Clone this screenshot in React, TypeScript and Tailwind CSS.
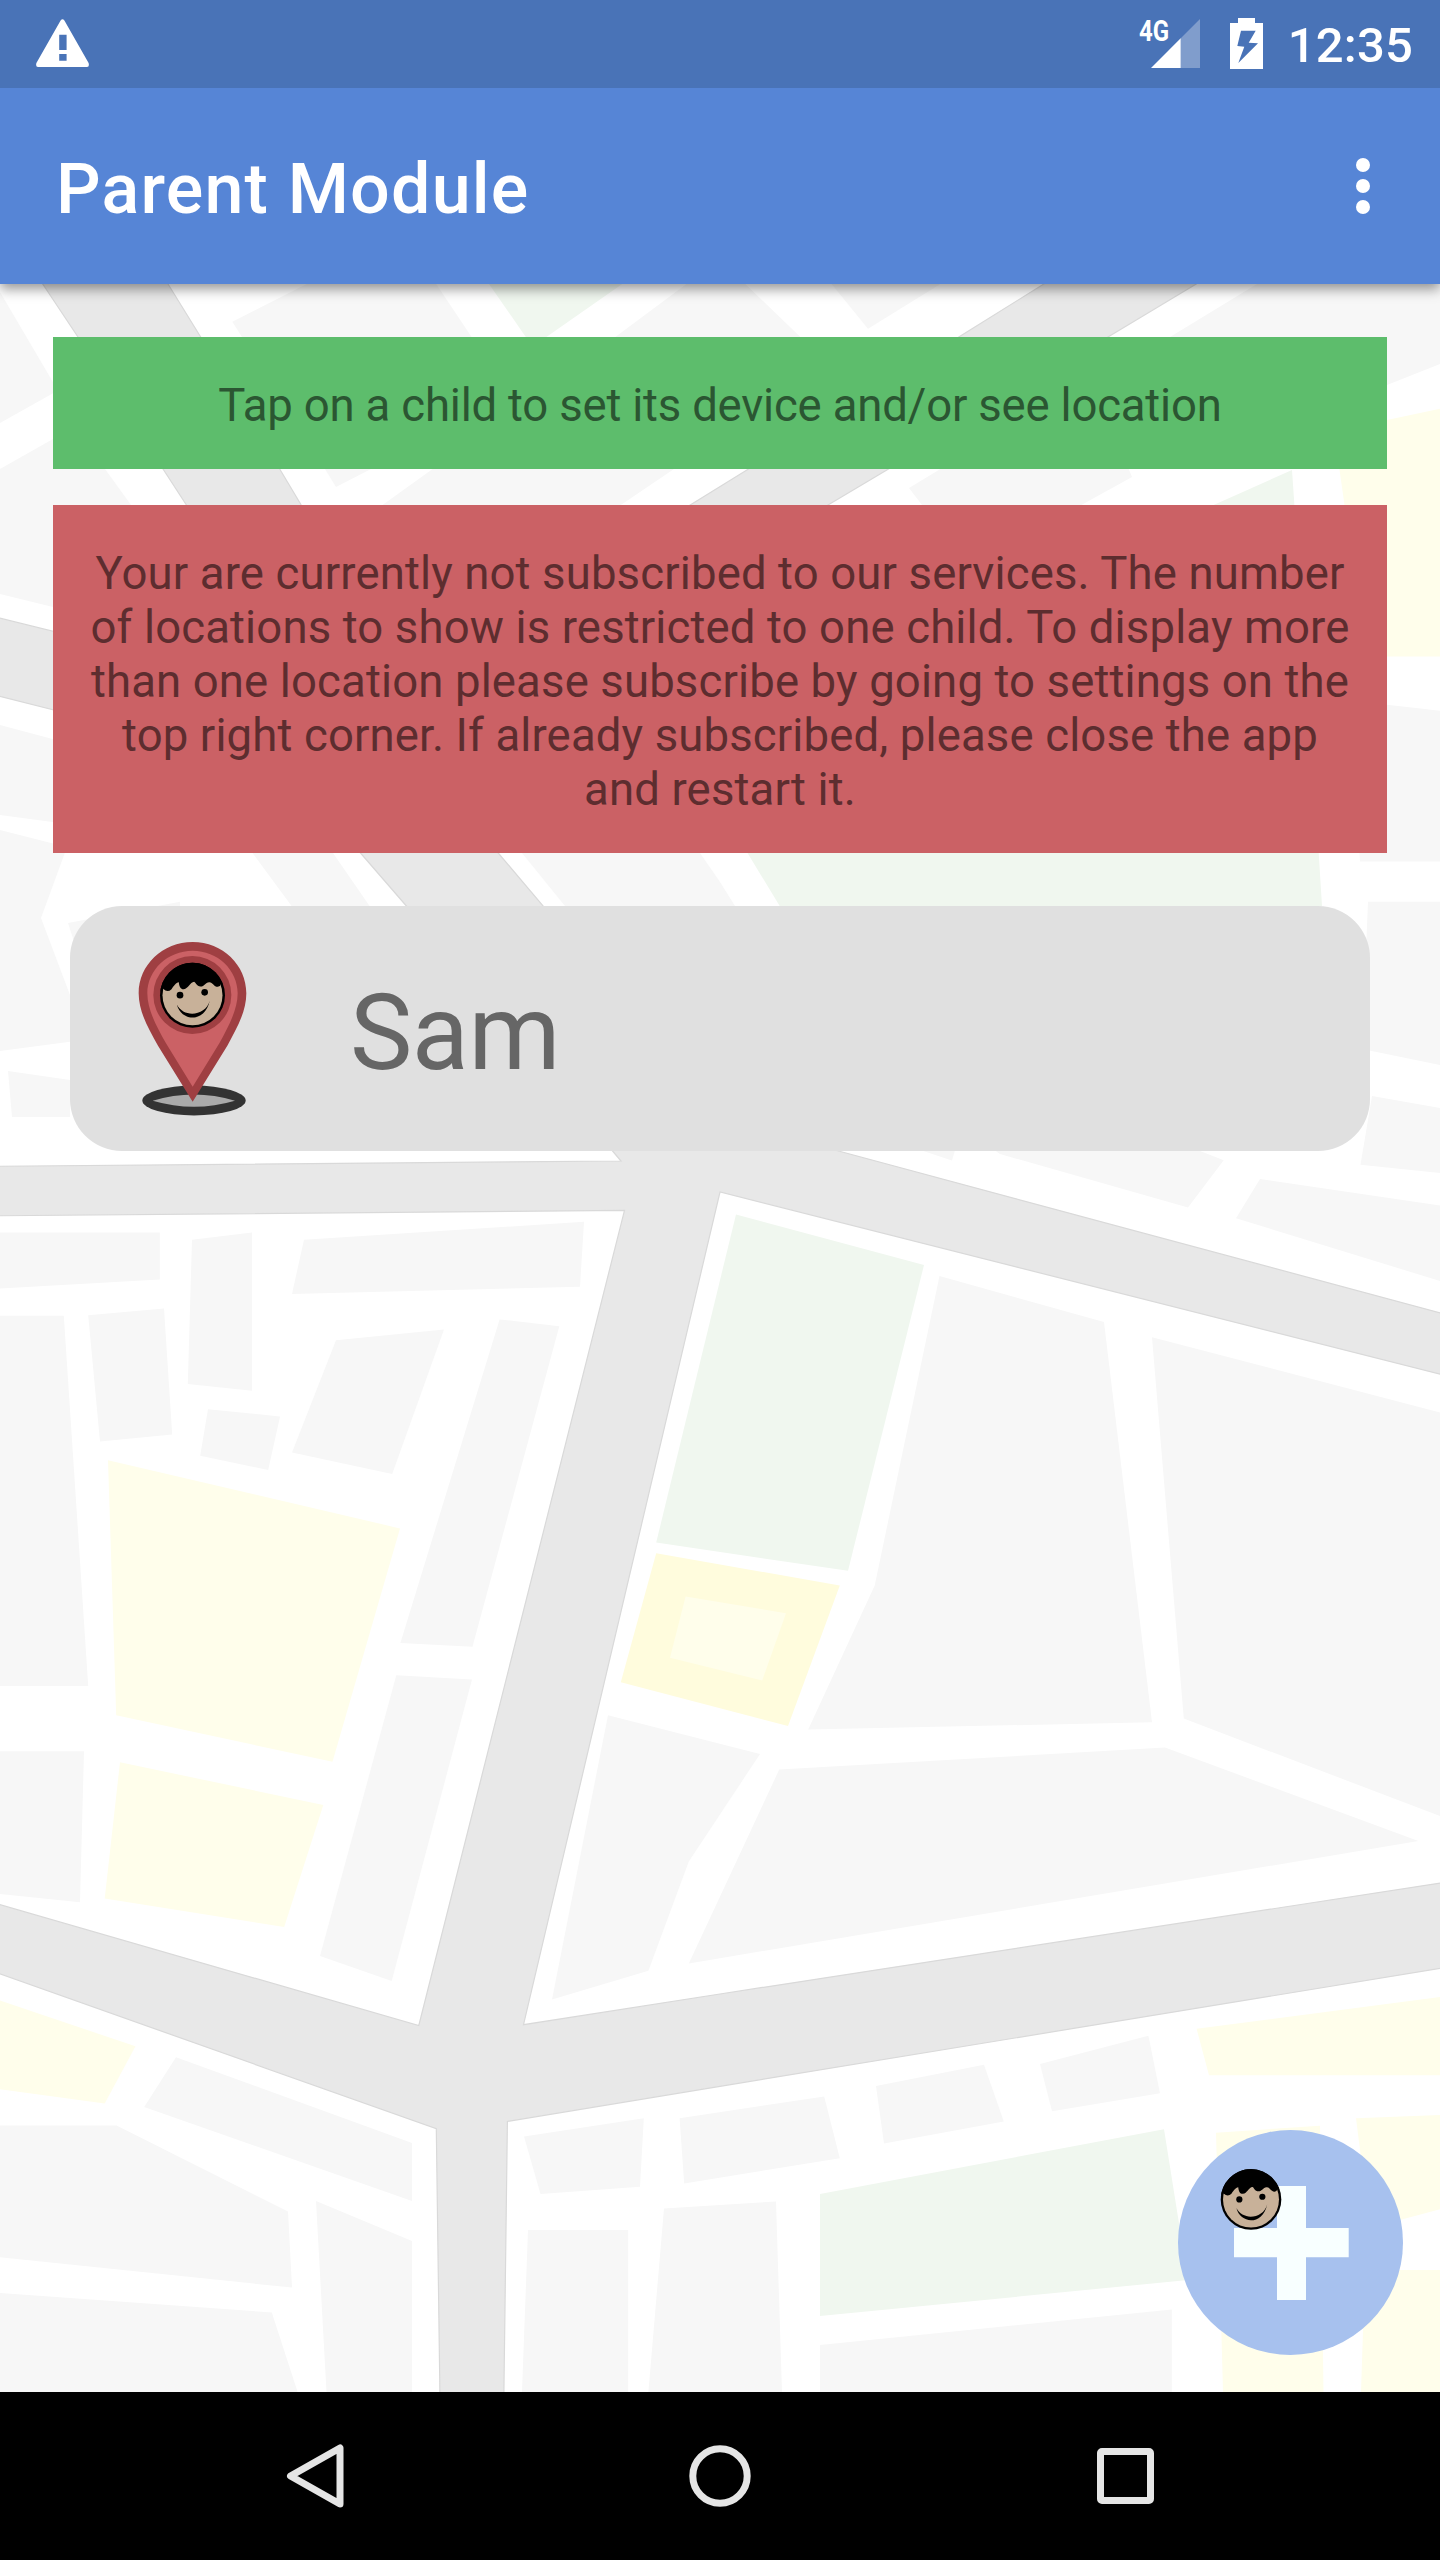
import React from "react";

type Tone = "block" | "park" | "sand" | "plaza";

const TONES: Record<Tone, string> = {
  block: "fill-[#f7f7f7]",
  park: "fill-[#f0f7ef]",
  sand: "fill-[#fffeeb]",
  plaza: "fill-[#fffcdd]",
};

const PARCELS: Record<Tone, string[]> = {
  block: [
    "0,292 57,389 57,391 0,423",
    "0,469 53,439 90,420 105,469 131,505 170,560 53,607 0,594",
    "0,725 60,741 60,823 0,815",
    "0,830 53,843.5 67,847 41,918 70,995 70,1041.7 0,1051",
    "8,1071 70,1080 70,1117 12,1117",
    "68,923 180,901.7 180,950 80,960",
    "252.5,853 291.6,906 369.6,906 333,853",
    "522,853 565,906 735,906 720,882 700,853",
    "1350,700 1387,704.7 1440,710.8 1440,861.4 1360,861.4",
    "1368,901.8 1440,901.8 1440,1065 1362,1049",
    "1257,284 1440,284 1440,364 1387,385 1340,405 1170,400 1170,337",
    "909,488 940.4,469 1128.7,469 1132,477 1081.4,505 922,505",
    "686.5,284 745.3,284 800.4,337 615.3,337",
    "831.6,284 940.4,284 868,328.8",
    "436.2,284 471.6,337 242,337 232.3,321.8 306.7,284",
    "325,469 336,487 371,469",
    "432.6,469 382.5,505 620.8,505 674,469",
    "0,1232.5 159.8,1232.5 159.8,1279.4 0,1288.4",
    "192,1239.8 252,1232.5 252,1390.8 187.8,1383.9",
    "304,1239.8 584,1221.8 580,1286.7 292,1294",
    "0,1315.7 63.8,1315.7 88.2,1686 0,1686",
    "88.2,1315.3 164,1308.4 172.2,1434.5 100,1441.4",
    "208,1409.2 280,1416.5 268.2,1470 200.2,1455.7",
    "336,1340.2 444,1329.6 392.2,1474 292,1452.4",
    "499.6,1319.4 559.3,1326.3 472.5,1646.7 400.4,1643",
    "396.3,1675.3 472,1679.4 391.7,1981 320,1956",
    "0,1751.2 84,1751.2 80,1902.2 0,1894",
    "608,1715.3 760,1754 688.8,1861.4 648.4,1970.8 552,1999.4",
    "939.5,1276 1104,1322 1152,1722.2 808.2,1729.6 874.7,1585.5",
    "1152,1337.3 1440,1412.4 1440,1816 1183.8,1718.6",
    "779.2,1769.6 1165,1747.5 1418.4,1841 720,1958.2 688.8,1963.5",
    "890,1140 958,1140 952,1160.6",
    "980,1140 1170,1138 1197.5,1150 1223.7,1160.2 1188,1207.6 1000,1154",
    "1260,1179 1440,1205.5 1440,1281 1236,1218.2",
    "1372,1096 1440,1108 1440,1173 1360.5,1164.7",
    "176,2057.3 412,2143 412,2201 144.2,2107",
    "0,2125.5 116.6,2125.5 288,2211.6 292,2287.6 0,2257.3",
    "0,2293 271.8,2312.4 297.6,2392 0,2392",
    "316,2201 412,2241 412,2392 326.5,2392",
    "524,2136.5 643.8,2118.2 640,2186.7 540.5,2194",
    "528,2230 628.2,2230 628.2,2392 522,2392",
    "664,2208.4 776,2201.4 782,2392 648.4,2392",
    "679.6,2118.2 824.2,2096.5 839.8,2158.2 684.2,2183.5",
    "876,2086 984,2064.7 1003.8,2121.4 884,2143.5",
    "1040,2064 1148.4,2035.7 1160,2093.3 1052,2111.2",
    "820,2345 1171.8,2309.6 1171.8,2392 820,2392",
  ],
  park: [
    "736,1214.5 924,1265 848,1570.8 656.2,1542.6",
    "747.5,853 779.7,906 1322,906 1318.7,853",
    "1292,470 1294.4,505 1213.6,505",
    "489,284 622.2,284 546.4,337 525.8,337",
    "820,2194 1164,2129.2 1188,2280 820,2316",
  ],
  sand: [
    "108,1460.2 400,1528.4 332.5,1761.8 116.2,1715.3",
    "120,1762.2 323.3,1805 284.2,1927 104.7,1898.6",
    "1334,431 1387,420 1440,408.8 1440,656.5 1350,656.5 1344.5,505",
    "0,2000.6 135.5,2046.3 104.7,2103.5 0,2089.2",
    "1196.6,2028.8 1440,1997 1440,2075.3 1209,2075.3",
    "1216,2132.7 1320,2125.7 1323.5,2392 1223,2392",
    "1356,2118.3 1440,2115 1440,2209.2 1370,2228",
    "1365,2270 1440,2270 1440,2392 1361,2392",
  ],
  plaza: ["656.2,1553.3 839.8,1585.5 788,1726 620.8,1682.2"],
};

const ROADS = [
  "M-5 617 L60 633 L60 711.5 L-5 695.2 Z",
  "M42.7 284 L34 268 L158 268 L168 284 L200.7 337 L279.7 469 L301.2 505 L400 640 L300 700 L186.4 505 L163 469 L78 337 Z",
  "M1067 268 L1043.8 284 L958.8 337 L748.5 469 L690.2 505 L600 560 L740 560 L828 505 L888.5 469 L1108 337 L1196.2 284 L1220 268 Z",
  "M-5 1166.3 L621 1161 L406.4 906 L360.5 853 L340 829 L478 829 L498.2 853 L543.2 906 L690 1110 L834.8 1150 L1445 1314.2 V1375.4 L720 1192 L523.5 2024.7 L720 1994 L1445 1882.3 V1967.6 L720 2086.3 L507.4 2121.4 L503.8 2400 H440 L436.3 2128.8 L-5 1972 V1903.2 L418.8 2025.5 L624.5 1210.4 L-5 1215.8 Z",
];

function MapBackdrop() {
  return (
    <svg className="absolute inset-0 h-full w-full" viewBox="0 0 1440 2560" aria-hidden="true">
      {(Object.keys(PARCELS) as Tone[]).map((tone) => (
        <g key={tone} className={TONES[tone]}>
          {PARCELS[tone].map((points) => (
            <polygon key={points} points={points} />
          ))}
        </g>
      ))}
      <polygon className="fill-[#fffeeb]" points="685.6,1596.5 786,1613.3 762.2,1680.6 670,1657.8" />
      <g className="fill-[#e8e8e8] stroke-[#d9d9d9]" strokeWidth="1.2">
        {ROADS.map((d) => (
          <path key={d} d={d} />
        ))}
      </g>
    </svg>
  );
}

/* Smiling child's head, centred on the origin with a radius of 97.5 */
function Face() {
  return (
    <g>
      <circle r="97.5" fill="#000" />
      <circle r="90" cy="0.5" fill="#c8b199" />
      <path
        d="M-97 -8 Q-94 -18 -88 -19 Q-75 -6 -63 -18 C-56 -28 -50 -38 -41 -39 C-40 -24 -34 -17 -26 -18 C-12 -19 -8 -39 5 -40 C10 -38 12 -26 24 -26 C36 -26 38 -38 50 -39 C60 -40 64 -25 76 -25 Q84 -27 86 -36 L92 -30 A97 97 0 0 0 -97 -8 Z"
        fill="#000"
      />
      <circle cx="-37.5" cy="0" r="10" />
      <circle cx="36.5" cy="-8.5" r="10" />
      <path d="M-47 28 C-34 80 38 84 52 16 C40 62 -26 70 -47 28 Z" />
    </g>
  );
}

function ChildPin() {
  return (
    <svg className="h-[210px] w-[150px]" viewBox="0 0 450 630" role="img" aria-label="Child location">
      <ellipse cx="222" cy="541.5" rx="155" ry="45" fill="#333" />
      <path d="M98 542 Q222 505 345 542 Q222 578 98 542 Z" fill="#aaa" />
      <path
        d="M218 66 C308 66 379 135 379 220 C379 275 350 325 322 377 L218 545 L114 377 C85 325 56 275 56 220 C56 135 128 66 218 66 Z"
        fill="#9f3f42"
      />
      <path
        d="M218 92 C293 92 353 150 353 220 C353 270 324 322 298 370 L218 500 L138 370 C111 322 82 270 82 220 C82 150 143 92 218 92 Z"
        fill="#cb6165"
      />
      <circle cx="217" cy="225" r="117" fill="#9f3f42" />
      <g transform="translate(217.5 225.5)">
        <Face />
      </g>
    </svg>
  );
}

function StatusBar() {
  return (
    <div className="flex h-[88px] items-start bg-[#4973b7] pl-[35px] pr-[27px] text-white">
      <svg className="mt-[19px] h-[48px] w-[55px]" viewBox="0 0 55 48">
        <path
          fillRule="evenodd"
          fill="#fff"
          d="M25.6 1.6 Q27.5 -1 29.4 1.6 L53.6 44 Q54.6 48 52 48 H3 Q.4 48 1.4 44 Z M24.2 15.7 V31 H31.6 V15.7 Z M24.2 35 V41.7 H31.6 V35 Z"
        />
      </svg>
      <div className="flex-1" />
      <span className="mt-[13px] w-[12px] origin-left scale-x-[0.8] text-[30px] font-bold leading-[36px]">4G</span>
      <svg className="mt-[19px] h-[49px] w-[49px]" viewBox="0 0 49 49">
        <path d="M29.5 19.5 L49 0 V49 H29.5 Z" fill="#fff" fillOpacity=".3" />
        <path d="M0 49 L29.7 19.3 V49 Z" fill="#fff" />
      </svg>
      <svg className="ml-[30px] mt-[18px] h-[51px] w-[33px]" viewBox="0 0 33 51">
        <path
          fillRule="evenodd"
          fill="#fff"
          d="M0 5 H8 V0 H25 V5 H33 V51 H0 Z M11 12.7 L7.3 28 L14.3 28.7 L8.3 45 L28 25.3 L18.7 24.7 L25.7 12.7 Z"
        />
      </svg>
      <span className="ml-[25px] mt-[17px] text-[49px] font-medium leading-[58px] tracking-[0.2px]">12:35</span>
    </div>
  );
}

function NavigationBar() {
  return (
    <div className="relative flex h-[168px] items-center bg-black pl-[286px]">
      <svg className="h-[66px] w-[58px]" viewBox="0 0 58 66" fill="none" stroke="#e5e5e5" strokeWidth="7" strokeLinejoin="round">
        <path d="M54 5 V61 L4.5 33 Z" />
      </svg>
      <svg className="ml-[345px] h-[62px] w-[62px]" viewBox="0 0 62 62" fill="none" stroke="#e5e5e5" strokeWidth="7">
        <circle cx="31" cy="31" r="27.2" />
      </svg>
      <div className="ml-[346px] h-[56px] w-[57px] rounded-[5px] border-[7px] border-[#e5e5e5]" />
    </div>
  );
}

export default function App() {
  return (
    <div className="relative flex h-[2560px] w-[1440px] flex-col overflow-hidden bg-white font-['Roboto',sans-serif]">
      <MapBackdrop />
      <header className="relative shadow-[0_5px_12px_rgba(0,0,0,0.42)]">
        <StatusBar />
        <div className="flex h-[196px] items-center justify-between bg-[#5685d6] pl-[56px] pr-[70px] pt-[6px]">
          <h1 className="text-[70px] font-medium leading-[82px] tracking-[1.2px] text-white">Parent Module</h1>
          <div className="mb-[7px] flex flex-col gap-[7px]">
            <span className="h-[14px] w-[14px] rounded-full bg-white" />
            <span className="h-[14px] w-[14px] rounded-full bg-white" />
            <span className="h-[14px] w-[14px] rounded-full bg-white" />
          </div>
        </div>
      </header>

      <main className="relative flex flex-1 flex-col px-[53px] pt-[53px]">
        <p className="bg-[#5dbd6c] px-[35px] pb-[36px] pt-[42px] text-center text-[45.5px] leading-[54px] tracking-[-0.19px] text-[#2b5632]">
          Tap on a child to set its device and/or see location
        </p>
        <p className="mt-[36px] whitespace-nowrap bg-[#cb6165] pb-[36px] pt-[42px] text-center text-[45.5px] leading-[54px] tracking-[0.14px] text-[#5d2d2f]">
          Your are currently not subscribed to our services. The number
          <br />
          of locations to show is restricted to one child. To display more
          <br />
          than one location please subscribe by going to settings on the
          <br />
          top right corner. If already subscribed, please close the app
          <br />
          and restart it.
        </p>
        <div className="mx-[17px] mt-[53px] flex h-[245px] items-start rounded-[52px] bg-[#e0e0e0] pl-[50px] pt-[14px]">
          <ChildPin />
          <span className="ml-[80px] mt-[52px] text-[105px] leading-[123px] tracking-[-0.5px] text-[#666]">Sam</span>
        </div>
        <button className="absolute bottom-[37px] right-[37px] h-[225px] w-[225px]" aria-label="Add child">
          <svg className="h-full w-full" viewBox="0 0 225 225">
            <circle cx="112.5" cy="112.5" r="112.5" fill="#a7c1ee" />
            <path d="M99 56 H128 V98 H170.7 V127.3 H128 V170 H99 V127.3 H56 V98 H99 Z" fill="#f8ffff" />
            <g transform="translate(73 69.4) scale(.311)">
              <Face />
            </g>
          </svg>
        </button>
      </main>

      <NavigationBar />
    </div>
  );
}
